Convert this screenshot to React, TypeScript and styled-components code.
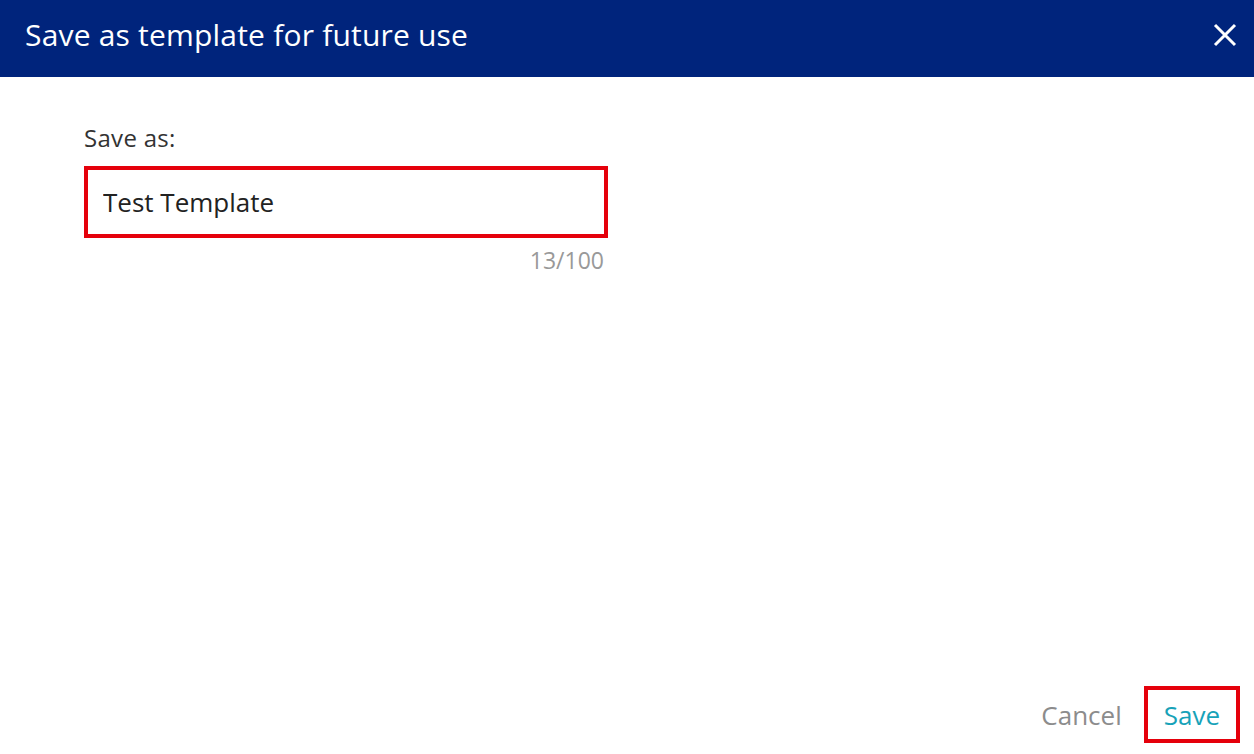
import { useState } from 'react';
import styled, { createGlobalStyle } from 'styled-components';

const GlobalStyle = createGlobalStyle`
  html, body {
    margin: 0;
    padding: 0;
    background: #ffffff;
    font-family: 'Open Sans', 'Noto Sans', sans-serif;
  }
  * { box-sizing: border-box; }
`;

const Dialog = styled.div`
  width: 1254px;
  height: 754px;
  display: flex;
  flex-direction: column;
  background: #ffffff;
`;

const Header = styled.div`
  height: 77px;
  background: #00247c;
  display: flex;
  align-items: center;
  justify-content: space-between;
  padding: 0 17px 8px 25px;
`;

const Title = styled.h1`
  margin: 0;
  color: #ffffff;
  font-size: 30px;
  font-weight: 400;
  letter-spacing: 0.2px;
`;

const CloseButton = styled.button`
  background: none;
  border: none;
  padding: 0;
  width: 24px;
  height: 24px;
  display: flex;
  align-items: center;
  justify-content: center;
  cursor: pointer;
`;

const Body = styled.div`
  flex: 1;
  padding: 46px 0 0 84px;
`;

const Field = styled.div`
  width: 524px;
  display: flex;
  flex-direction: column;
`;

const Label = styled.label`
  font-size: 24px;
  letter-spacing: 0.3px;
  color: #333333;
  margin: 0 0 13px 0;
  line-height: 30px;
`;

const NameInput = styled.input`
  height: 72px;
  border: 4px solid #e5000b;
  padding: 0 15px;
  font-family: inherit;
  font-size: 26px;
  color: #222222;
  outline: none;
  background: #ffffff;
`;

const Counter = styled.div`
  align-self: flex-end;
  margin: 6px 4px 0 0;
  font-size: 23px;
  color: #999999;
`;

const Footer = styled.div`
  display: flex;
  justify-content: flex-end;
  align-items: center;
  gap: 22px;
  padding: 0 14px 11px 0;
`;

const TextButton = styled.button<{ $primary?: boolean; $outlined?: boolean }>`
  background: none;
  font-family: inherit;
  font-size: 26px;
  cursor: pointer;
  color: ${({ $primary }) => ($primary ? '#17a2b8' : '#8c8c8c')};
  border: ${({ $outlined }) => ($outlined ? '4px solid #e5000b' : 'none')};
  height: 57px;
  padding: 0 ${({ $outlined }) => ($outlined ? '16px' : '0')};
`;

function App() {
  const [name, setName] = useState('Test Template');

  return (
    <>
      <GlobalStyle />
      <Dialog>
        <Header>
          <Title>Save as template for future use</Title>
          <CloseButton aria-label="Close">
            <svg width="24" height="24" viewBox="0 0 24 24">
              <path d="M2 2 L22 22 M22 2 L2 22" stroke="#ffffff" strokeWidth="3" />
            </svg>
          </CloseButton>
        </Header>
        <Body>
          <Field>
            <Label>Save as:</Label>
            <NameInput value={name} maxLength={100} onChange={({ target }) => setName(target.value)} />
            <Counter>{name.length}/100</Counter>
          </Field>
        </Body>
        <Footer>
          <TextButton>Cancel</TextButton>
          <TextButton $primary $outlined>Save</TextButton>
        </Footer>
      </Dialog>
    </>
  );
}

export default App;
